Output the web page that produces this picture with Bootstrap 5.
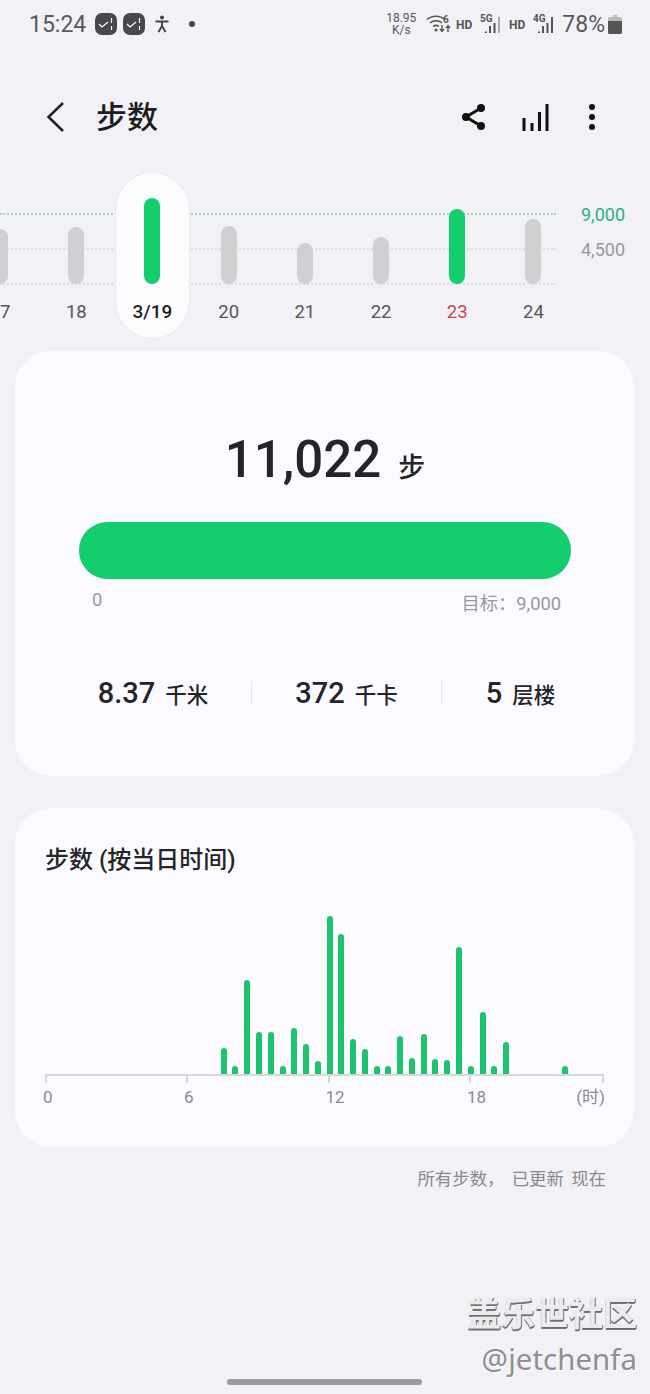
<!doctype html>
<html lang="zh-CN">
<head>
    <meta charset="utf-8">
    <meta name="viewport" content="width=device-width, initial-scale=1">
    <title>步数</title>
    <link href="https://cdn.jsdelivr.net/npm/bootstrap@5.3.3/dist/css/bootstrap.min.css" rel="stylesheet">
    <style>
        body {
            background-color: #f1f1f6;
            color: #252528;
            font-family: Roboto, "Noto Sans CJK SC", sans-serif;
            overflow: hidden;
        }
        .page-wrap { position: relative; width: 650px; height: 1394px; }

        /* status bar */
        .status-bar { height: 48px; padding: 0 28px 0 29px; color: #58585c; }
        .status-time { font-size: 23px; width: 66px; padding-top: 3px; }
        .status-pct { font-size: 23px; margin: 0 3px 0 5px; padding-top: 3px; }
        .speed-text { font-size: 12px; line-height: 12px; text-align: center; width: 32px; margin-right: 9px; }
        .icon-gap-s { margin-left: 6px; }

        /* title row */
        .title-row { height: 56px; margin-top: 41px; padding-left: 46px; }
        .page-title { font-size: 31px; font-weight: 500; line-height: 1; margin: 0 0 0 30px; color: #1c1c1e; }
        .title-actions { margin-left: auto; margin-right: 54px; }
        .action-bars { margin: 0 38px 0 35px; }

        /* week strip */
        .week-strip { position: relative; height: 165px; margin-top: 28px; overflow: hidden; }
        .grid-line { position: absolute; left: 0; width: 556px; border-top: 2px dotted #dcdce0; }
        .grid-line.goal-line { border-top-color: #a5d8bb; }
        .grid-val { position: absolute; left: 581px; font-size: 18px; line-height: 22px; color: #999; }
        .grid-val.goal-val { color: #27b278; }
        .week-cols { position: relative; margin-left: -38px; }
        .week-col { flex: none; width: 76.2px; height: 165px; }
        .week-bar-box { height: 111px; }
        .week-bar { width: 16px; border-radius: 8px; background-color: #d0d0d2; }
        .week-bar.hit { background-color: #12ce6d; }
        .week-day { font-size: 18.5px; line-height: 22px; margin-top: 17px; color: #55555a; }
        .week-day.sun { color: #c04a4a; }
        .week-pill { width: 73px; background-color: #fcfcff; box-shadow: 0 0 0 1px #eaeaee; border-radius: 37px; }
        .week-pill .week-day { color: #1c1c1e; font-weight: 500; font-size: 19px; }

        /* cards */
        .panel-box { background-color: #fbfbff; border-radius: 36px; margin: 0 16px 0 15px; }
        .steps-panel { height: 425px; margin-top: 13px; padding: 82px 63px 0 64px; }
        .steps-total { line-height: 54px; height: 54px; }
        .steps-num { font-size: 51px; font-weight: 500; }
        .steps-unit { font-size: 27px; font-weight: 500; margin-left: 17px; }
        .steps-progress { height: 57px; margin-top: 35px; border-radius: 29px; background-color: #e3e3e6; }
        .steps-progress .progress-bar { background-color: #12ce6d; }
        .progress-labels { font-size: 18.3px; line-height: 22px; color: #98989c; padding: 10px 10px 0 13px; }
        .stat-row { margin: 66px 0 0 -24px; }
        .stat-cell { flex: none; height: 24px; line-height: 24px; white-space: nowrap; }
        .stat-cell + .stat-cell { border-left: 1px solid #e6e6ea; }
        .stat-num { font-size: 29px; font-weight: 500; }
        .stat-unit { font-size: 21.5px; font-weight: 500; margin-left: 10px; }

        .hourly-panel { height: 339px; margin-top: 32px; padding: 36px 0 0 30px; }
        .hourly-title { font-size: 24px; font-weight: 500; line-height: 32px; margin: 0; }
        .hour-bars { height: 198px; margin: 0 0 0 -3.7px; }
        .hour-slot { flex: none; width: 11.78px; }
        .hour-bar { width: 6px; border-radius: 3px 3px 0 0; background-color: #1cc46f; }
        .hour-axis, .hour-labels { display: grid; grid-template-columns: 141px 141.5px 141.5px 135px; }
        .hour-axis { border-top: 2px solid #d8d8da; width: 559px; }
        .hour-axis > div { height: 7px; border-left: 2px solid #d8d8da; }
        .hour-axis > div:last-child { border-right: 2px solid #d8d8da; }
        .hour-labels { grid-template-columns: 141px 141.5px 141.5px 138px; width: 564px; margin: 3px 0 0 -2px; font-size: 17px; line-height: 22px; color: #8a8a8e; }

        .update-note { font-size: 17.4px; line-height: 24px; color: #8a8a8e; text-align: right; margin: 20px 44px 0 0; word-spacing: 3px; }

        /* bottom */
        .home-bar { width: 195px; height: 6px; border-radius: 3px; background-color: #9b9b9f; margin: auto 0 9px 227px; }
        .watermark { position: absolute; right: 13px; top: 1289px; text-align: right; font-family: "Noto Sans CJK SC", sans-serif; }
        .mark-cn { font-size: 34px; line-height: 46px; font-weight: 700; color: #ececee; text-shadow: 1px 1px 0 #6c6c70, 0 2px 0 #77777b; }
        .mark-en { font-size: 29.5px; line-height: 46px; margin-top: 1px; color: #8f8f93; text-shadow: 1px 1px 0 #fff; font-family: "Noto Sans", sans-serif; }
    </style>
</head>
<body>
<div class="page-wrap d-flex flex-column">

    <!-- Status bar -->
    <div class="status-bar d-flex align-items-center flex-none">
        <span class="status-time">15:24</span>
        <svg width="22" height="22" viewBox="0 0 22 22"><rect width="22" height="22" rx="7" fill="#48484c"/><path d="M4 11l3 3 6-5" fill="none" stroke="#fff" stroke-width="1.2"/><path d="M16.500 5v5M16.500 13v4" stroke="#fff" stroke-width="1.2"/></svg>
        <svg class="icon-gap-s" width="22" height="22" viewBox="0 0 22 22"><rect width="22" height="22" rx="7" fill="#48484c"/><path d="M4 11l3 3 6-5" fill="none" stroke="#fff" stroke-width="1.2"/><path d="M16.500 5v5M16.500 13v4" stroke="#fff" stroke-width="1.2"/></svg>
        <svg style="margin-left:9px" width="16" height="18" viewBox="0 0 16 18"><circle cx="8" cy="2.500" r="2" fill="#444"/><path d="M1.500 6.500h13M8 6.500v5M8 11l-3.500 6M8 11l3.500 6" fill="none" stroke="#444" stroke-width="2"/></svg>
        <svg style="margin-left:18px" width="8" height="8" viewBox="0 0 8 8"><circle cx="4" cy="4" r="3" fill="#48484c"/></svg>

        <div class="speed-text ms-auto">18.95<br>K/s</div>
        <svg width="26" height="22" viewBox="0 0 26 22"><path d="M1 6.500C6 2 14 2 19 6.500M4 10c3.500-3 8.500-3 12 0M7 13.500c2-1.500 4-1.500 6 0" fill="none" stroke="#555" stroke-width="1.5"/><circle cx="10" cy="17" r="1.600" fill="#555"/><text x="17" y="10" font-size="10" font-weight="700" fill="#555" font-family="Roboto">6</text><path d="M16 12v6M14 16l2 2.500 2-2.500M22 19v-6M20 15l2-2.500 2 2.500" fill="none" stroke="#555" stroke-width="1.400"/></svg>
        <svg style="margin-left:4px" width="18" height="14" viewBox="0 0 18 14"><text x="0" y="12" font-size="12" font-weight="700" fill="#555" font-family="Roboto">HD</text></svg>
        <svg class="icon-gap-s" width="24" height="22" viewBox="0 0 24 22"><text x="0" y="9" font-size="10" font-weight="700" fill="#555" font-family="Roboto">5G</text><path d="M6 18.500v1.500M10 13v7M14.500 10v10" stroke="#555" stroke-width="2"/><path d="M19 4v16" stroke="#aaa" stroke-width="2"/></svg>
        <svg style="margin-left:5px" width="18" height="14" viewBox="0 0 18 14"><text x="0" y="12" font-size="12" font-weight="700" fill="#555" font-family="Roboto">HD</text></svg>
        <svg class="icon-gap-s" width="24" height="22" viewBox="0 0 24 22"><text x="0" y="9" font-size="10" font-weight="700" fill="#555" font-family="Roboto">4G</text><path d="M6 18.500v1.500M10 13v7M14.500 10v10M19 4v16" stroke="#555" stroke-width="2"/></svg>
        <span class="status-pct">78%</span>
        <svg width="14" height="19" viewBox="0 0 14 19"><path d="M5 0h4v2h3.500a1.500 1.500 0 0 1 1.500 1.500V6H0V3.500A1.500 1.500 0 0 1 1.500 2H5z" fill="#bbb"/><path d="M0 6h14v11.500a1.500 1.500 0 0 1-1.500 1.500h-11A1.500 1.500 0 0 1 0 17.500z" fill="#555"/></svg>
    </div>

    <!-- Title row -->
    <div class="title-row d-flex align-items-center">
        <svg width="20" height="32" viewBox="0 0 20 32"><path d="M17 2L2.500 16 17 30" fill="none" stroke="#222" stroke-width="2.500"/></svg>
        <h1 class="page-title">步数</h1>
        <div class="title-actions d-flex align-items-center">
            <svg width="27" height="28" viewBox="0 0 27 28"><path d="M21 5L6 14l15 9" fill="none" stroke="#111" stroke-width="3"/><circle cx="21" cy="5" r="4" fill="#111"/><circle cx="6" cy="14" r="4" fill="#111"/><circle cx="21" cy="23" r="4" fill="#111"/></svg>
            <svg class="action-bars" width="28" height="30" viewBox="0 0 28 30"><path d="M2 16v13M10 21v8M17.500 10v19M25 2v27" stroke="#111" stroke-width="3"/></svg>
            <svg width="8" height="30" viewBox="0 0 8 30"><circle cx="4" cy="5" r="3" fill="#111"/><circle cx="4" cy="15" r="3" fill="#111"/><circle cx="4" cy="25" r="3" fill="#111"/></svg>
        </div>
    </div>

    <!-- Week strip -->
    <div class="week-strip">
        <div class="grid-line goal-line" style="top:40px"></div>
        <div class="grid-line" style="top:75px"></div>
        <div class="grid-line" style="top:110px"></div>
        <div class="grid-val goal-val" style="top:31px">9,000</div>
        <div class="grid-val" style="top:66px">4,500</div>
        <div class="week-cols d-flex">
            <div class="week-col d-flex flex-column align-items-center"><div class="week-bar-box d-flex align-items-end"><div class="week-bar" style="height:55px"></div></div><div class="week-day">17</div></div>
            <div class="week-col d-flex flex-column align-items-center"><div class="week-bar-box d-flex align-items-end"><div class="week-bar" style="height:57px"></div></div><div class="week-day">18</div></div>
            <div class="week-col d-flex justify-content-center"><div class="week-pill d-flex flex-column align-items-center"><div class="week-bar-box d-flex align-items-end"><div class="week-bar hit" style="height:86px"></div></div><div class="week-day">3/19</div></div></div>
            <div class="week-col d-flex flex-column align-items-center"><div class="week-bar-box d-flex align-items-end"><div class="week-bar" style="height:58px"></div></div><div class="week-day">20</div></div>
            <div class="week-col d-flex flex-column align-items-center"><div class="week-bar-box d-flex align-items-end"><div class="week-bar" style="height:41px"></div></div><div class="week-day">21</div></div>
            <div class="week-col d-flex flex-column align-items-center"><div class="week-bar-box d-flex align-items-end"><div class="week-bar" style="height:47px"></div></div><div class="week-day">22</div></div>
            <div class="week-col d-flex flex-column align-items-center"><div class="week-bar-box d-flex align-items-end"><div class="week-bar hit" style="height:75px"></div></div><div class="week-day sun">23</div></div>
            <div class="week-col d-flex flex-column align-items-center"><div class="week-bar-box d-flex align-items-end"><div class="week-bar" style="height:65px"></div></div><div class="week-day">24</div></div>
        </div>
    </div>

    <!-- Steps card -->
    <div class="panel-box steps-panel">
        <div class="steps-total d-flex justify-content-center align-items-baseline"><span class="steps-num">11,022</span><span class="steps-unit">步</span></div>
        <div class="progress steps-progress"><div class="progress-bar" style="width:100%"></div></div>
        <div class="progress-labels d-flex justify-content-between"><span>0</span><span class="pt-1">目标：9,000</span></div>
        <div class="stat-row d-flex">
            <div class="stat-cell d-flex justify-content-center align-items-baseline" style="width:196px"><span class="stat-num">8.37</span><span class="stat-unit">千米</span></div>
            <div class="stat-cell d-flex justify-content-center align-items-baseline" style="width:190px"><span class="stat-num">372</span><span class="stat-unit">千卡</span></div>
            <div class="stat-cell d-flex justify-content-center align-items-baseline" style="width:158px"><span class="stat-num">5</span><span class="stat-unit">层楼</span></div>
        </div>
    </div>

    <!-- Hourly card -->
    <div class="panel-box hourly-panel">
        <h2 class="hourly-title">步数 (按当日时间)</h2>
        <div class="hour-bars d-flex align-items-end" id="hourBars"></div>
        <div class="hour-axis"><div></div><div></div><div></div><div></div></div>
        <div class="hour-labels"><span>0</span><span>6</span><span>12</span><span class="d-flex justify-content-between"><span>18</span><span>(时)</span></span></div>
    </div>

    <div class="update-note">所有步数， 已更新 现在</div>

    <div class="home-bar"></div>

    <div class="watermark">
        <div class="mark-cn">盖乐世社区</div>
        <div class="mark-en">@jetchenfa</div>
    </div>
</div>

<script src="https://cdn.jsdelivr.net/npm/bootstrap@5.3.3/dist/js/bootstrap.bundle.min.js"></script>
<script>
    // half-hour step counts, drawn as bar heights in px
    const slots = {15:26,16:8,17:94,18:42,19:42,20:8,21:46,22:30,23:13,24:158,25:140,26:35,27:25,28:8,29:8,30:38,31:16,32:40,33:15,34:14,35:127,36:8,37:62,38:8,39:32,44:8};
    const box = document.getElementById('hourBars');
    for (let i = 0; i < 48; i++) {
        const slot = document.createElement('div');
        slot.className = 'hour-slot d-flex justify-content-center';
        if (slots[i]) {
            slot.innerHTML = `<div class="hour-bar" style="height:${slots[i]}px"></div>`;
        }
        box.appendChild(slot);
    }
</script>
</body>
</html>
